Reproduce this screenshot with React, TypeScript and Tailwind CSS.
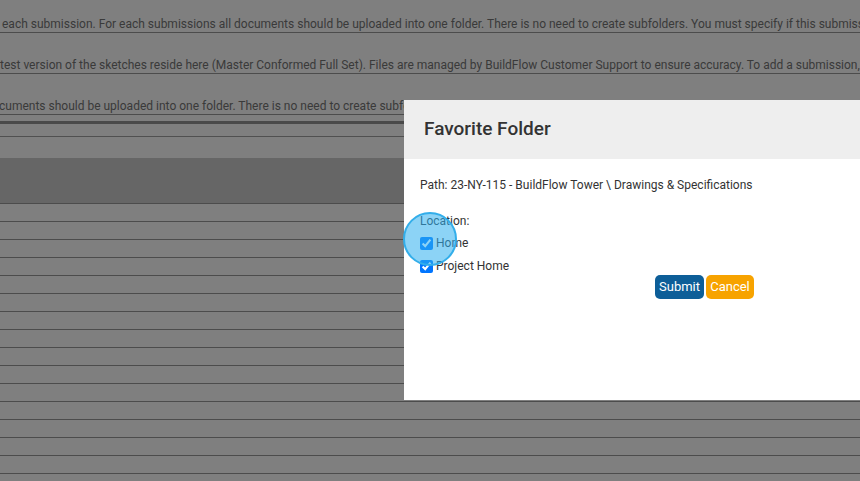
import React from 'react';

const NOTES = [
  { text: 'each submission. For each submissions all documents should be uploaded into one folder. There is no need to create subfolders. You must specify if this submission is a revision.', pad: 'pl-[2px]' },
  { text: 'test version of the sketches reside here (Master Conformed Full Set). Files are managed by BuildFlow Customer Support to ensure accuracy. To add a submission, please contact support.', pad: 'pl-0' },
  { text: 'cuments should be uploaded into one folder. There is no need to create subfolders. You must specify if this submission is a revision.', pad: '-ml-[1px]' },
];

function NoteRow({ text, pad, first }: { text: string; pad: string; first?: boolean }) {
  return (
    <div
      className={
        (first ? 'h-[33px]' : 'h-[41px]') +
        ' flex items-end border-b border-[#989898] overflow-hidden'
      }
    >
      <div className={'whitespace-nowrap text-[12px] leading-[16px] text-[#757575] ' + pad}>
        {text}
      </div>
    </div>
  );
}

function Background() {
  const rows = Array.from({ length: 16 });
  return (
    <div className="flex flex-col">
      {NOTES.map((n, i) => (
        <NoteRow key={i} text={n.text} pad={n.pad} first={i === 0} />
      ))}
      <div className="mt-[6px] h-[3px] bg-[#959595]" />
      <div className="mt-[12px] h-[1px] bg-[#a0a0a0]" />
      <div className="mt-[21px] h-[46px] bg-[#cccccc] border-b border-[#989898]" />
      {rows.map((_, i) => (
        <div key={i} className="h-[18px] border-b border-[#989898]" />
      ))}
    </div>
  );
}

function FavoriteFolderModal() {
  return (
    <div className="absolute left-[404px] top-[100px] w-[601px] h-[300px] bg-white">
      <div className="h-[59px] bg-[#eeeeee] flex items-center px-5">
        <h2 className="text-[19px] font-medium text-[#333333]">Favorite Folder</h2>
      </div>
      <div className="px-4 text-[12px] leading-[16px] text-[#333333]">
        <div className="pt-[18px]">
          Path: 23-NY-115 - BuildFlow Tower \ Drawings &amp; Specifications
        </div>
        <div className="mt-[20px]">Location:</div>
        <label className="mt-[6px] flex items-center gap-[3px] h-[16px]">
          <input type="checkbox" defaultChecked className="m-0 w-[13px] h-[13px]" />
          <span>Home</span>
        </label>
        <label className="mt-[7px] flex items-center gap-[3px] h-[16px]">
          <input type="checkbox" defaultChecked className="m-0 w-[13px] h-[13px]" />
          <span>Project Home</span>
        </label>
        <div className="mt-[1px] flex justify-center gap-[2px]">
          <button className="h-[24px] w-[49px] rounded-[5px] bg-[#0d5e98] text-white text-[13px]">
            Submit
          </button>
          <button className="h-[24px] w-[48px] rounded-[5px] bg-[#f7a300] text-white text-[13px]">
            Cancel
          </button>
        </div>
      </div>
    </div>
  );
}

export default function App() {
  return (
    <div
      className="relative w-[860px] h-[481px] overflow-hidden bg-white"
      style={{ fontFamily: 'Roboto, "Liberation Sans", sans-serif' }}
    >
      <Background />
      <div className="absolute inset-0 bg-black/50" />
      <FavoriteFolderModal />
      {/* click highlight */}
      <div className="absolute left-[403px] top-[212px] w-[54px] h-[54px] rounded-full bg-[rgba(45,175,238,0.55)] border-2 border-[#33aeea] pointer-events-none" />
    </div>
  );
}
